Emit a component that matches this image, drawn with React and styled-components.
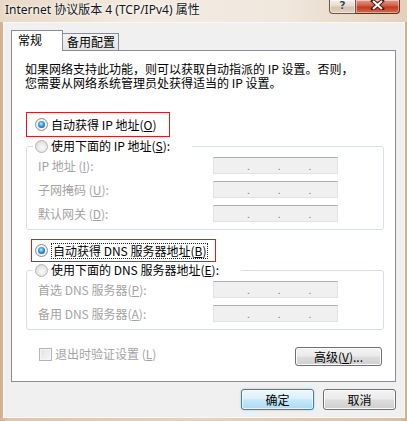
// Dependencies
// -----------------------------------------------
import React from 'react';
import styled, { createGlobalStyle, css } from 'styled-components';

// Global
// -----------------------------------------------
const GlobalStyle = createGlobalStyle`
  html, body {
    margin: 0;
    padding: 0;
    background: #dcc0a2;
  }
  body {
    font-family: "Noto Sans CJK SC", "Noto Sans", sans-serif;
  }
`;

// Window chrome
// -----------------------------------------------
const Window = styled.div`
  width: 407px;
  height: 421px;
  box-sizing: border-box;
  display: flex;
  flex-direction: column;
  overflow: hidden;
  background: linear-gradient(90deg, #d2b08e 0%, #e0c5a8 2%, #e6d2bd 50%, #dcc0a2 98%, #cfae8d 100%);
`;

const TitleBar = styled.div`
  flex: 0 0 22px;
  display: flex;
  align-items: flex-start;
  justify-content: space-between;
  padding: 0 7px 0 5px;
  background: linear-gradient(90deg, #e9d8c6 0%, #f3ebe2 35%, #f0e7dd 70%, #e4d0bc 100%);
`;

const Title = styled.div`
  font-family: "Noto Sans", "Noto Sans CJK SC", sans-serif;
  font-size: 12px;
  line-height: 20px;
  color: #141414;
  text-shadow: 0 0 5px #fff, 0 0 2px #fff;
  white-space: nowrap;
`;

const Captions = styled.div`
  display: flex;
`;

const CaptionButton = styled.div`
  box-sizing: border-box;
  height: 14px;
  display: flex;
  align-items: center;
  justify-content: center;
  border: 1px solid #6b5647;
  border-top: none;
  box-shadow: inset 0 0 0 1px rgba(255, 255, 255, 0.45);
  ${p => p.$close ? css`
    width: 44px;
    border-left: none;
    border-bottom-right-radius: 4px;
    border-color: #6a2419;
    background: linear-gradient(180deg, #e39a88 0%, #d4634c 40%, #c33a22 55%, #d9684a 100%);
  ` : css`
    width: 27px;
    border-bottom-left-radius: 4px;
    background: linear-gradient(180deg, #f6efe8 0%, #e8dbcd 45%, #d7c2ad 55%, #e3d2c1 100%);
  `}
`;

const HelpGlyph = styled.span`
  font-family: "DejaVu Sans", sans-serif;
  font-weight: bold;
  font-size: 11px;
  line-height: 11px;
  margin-top: -3px;
  color: #3a4660;
  text-shadow: 0 0 1px #fff, 0 0 1px #fff;
`;

// Client area
// -----------------------------------------------
const Client = styled.div`
  margin-left: 3px;
  width: 402px;
  height: 396px;
  box-sizing: border-box;
  border: 1px solid #fbf8f4;
  background: #f0f0f0;
  padding: 7px 8px 0 7px;
  display: flex;
  flex-direction: column;
`;

const TabStrip = styled.div`
  display: flex;
  align-items: flex-end;
  height: 20px;
  position: relative;
  z-index: 2;
`;

const Tab = styled.div`
  box-sizing: border-box;
  font-size: 12px;
  line-height: 14px;
  color: #000;
  border: 1px solid #898c95;
  border-bottom: none;
  ${p => p.$active ? css`
    width: 52px;
    height: 21px;
    margin-bottom: -1px;
    padding: 2px 0 0 6px;
    background: #fff;
  ` : css`
    width: 56px;
    height: 17px;
    border-left: none;
    padding: 1px 0 0 4px;
    background: linear-gradient(180deg, #f4f4f4 0%, #e4e4e4 100%);
  `}
`;

const Panel = styled.div`
  box-sizing: border-box;
  width: 385px;
  height: 332px;
  border: 1px solid #898c95;
  background: #fff;
  padding: 13px 11px 0 14px;
  display: flex;
  flex-direction: column;
  align-items: flex-start;
`;

const Desc = styled.div`
  margin: -2px 0 0 -1px;
  font-size: 12px;
  color: #000;
  white-space: nowrap;
`;

const DescLine = styled.p`
  margin: 0;
  line-height: 14px;
`;

// Options
// -----------------------------------------------
const Marked = styled.div`
  box-sizing: border-box;
  display: flex;
  align-items: center;
  border: 1px solid #e51717;
  width: ${p => p.$w}px;
  height: ${p => p.$h}px;
  margin: ${p => p.$mt}px 0 0 ${p => p.$ml}px;
  padding-left: ${p => p.$pl}px;
`;

const Choice = styled.span`
  display: inline-flex;
  align-items: center;
  gap: 3px;
  font-size: 12px;
  line-height: 14px;
  white-space: nowrap;
  color: ${p => p.$disabled ? '#a3a3a3' : '#000'};
`;

const Focus = styled.span`
  border: 1px dotted #222;
  padding: 0 1px;
  line-height: 14px;
`;

const RadioMark = styled.span`
  box-sizing: border-box;
  flex: 0 0 13px;
  width: 13px;
  height: 13px;
  border-radius: 50%;
  position: relative;
  border: 1px solid ${p => p.$disabled ? '#b4b4b4' : '#8e8f8f'};
  background: ${p => p.$disabled
    ? 'radial-gradient(circle at 55% 60%, #fafafa 0%, #e6e6e6 55%, #cfcfcf 100%)'
    : 'radial-gradient(circle at 50% 50%, #ffffff 0%, #f2f2f2 60%, #d9d9d9 100%)'};
  ${p => p.$checked && css`
    &::after {
      content: '';
      position: absolute;
      left: 2px;
      top: 2px;
      width: 7px;
      height: 7px;
      border-radius: 50%;
      background: radial-gradient(circle at 45% 40%, #c4f0ff 0%, #3ea2dc 40%, #14507f 90%);
    }
  `}
`;

const Group = styled.fieldset`
  align-self: stretch;
  margin: ${p => p.$mt}px 0 0 0;
  padding: 4px 11px 7px 11px;
  border: 1px solid #d5dfe5;
  border-radius: 3px;
  min-width: 0;
`;

const Legend = styled.legend`
  display: flex;
  align-items: center;
  margin-left: -5px;
  padding: 0 22px 0 2px;
  height: 14px;
`;

const Fields = styled.div`
  display: grid;
  grid-template-columns: 175px 125px;
  row-gap: 7px;
  align-items: center;
`;

const FieldLabel = styled.span`
  font-size: 12px;
  line-height: 14px;
  color: #a3a3a3;
  white-space: nowrap;
`;

const IpBox = styled.div`
  box-sizing: border-box;
  height: 17px;
  border: 1px solid #dfe3e8;
  border-top-color: #abadb3;
  background: #f0f0f0;
  display: flex;
  align-items: flex-end;
  padding: 0 0 1px 33px;
  gap: 28px;
`;

const Dot = styled.span`
  font-family: "Liberation Sans", sans-serif;
  font-size: 10px;
  line-height: 10px;
  color: #6f6f6f;
`;

// Footer
// -----------------------------------------------
const PanelFoot = styled.div`
  align-self: stretch;
  margin-top: 17px;
  display: flex;
  justify-content: space-between;
  align-items: flex-start;
  padding: 0 2px 0 13px;
`;

const CheckMark = styled.span`
  box-sizing: border-box;
  flex: 0 0 13px;
  width: 13px;
  height: 13px;
  border: 1px solid #b5b5b5;
  background: linear-gradient(135deg, #e2e2e2 0%, #f7f7f7 100%);
  box-shadow: inset 0 0 0 1px #f5f5f5;
`;

const Button = styled.button`
  box-sizing: border-box;
  width: ${p => p.$w}px;
  height: ${p => p.$h}px;
  padding: 0;
  font-family: "Noto Sans CJK SC", sans-serif;
  font-size: 12px;
  line-height: 14px;
  color: #000;
  border-radius: 3px;
  ${p => p.$primary ? css`
    border: 1px solid #3c7fb1;
    background: linear-gradient(180deg, #ecf7fd 0%, #ddf1fc 45%, #c6e8f9 52%, #abdaf3 100%);
    box-shadow: inset 0 0 0 1px rgba(255, 255, 255, 0.7), 0 0 2px rgba(80, 170, 230, 0.6);
  ` : css`
    border: 1px solid #707070;
    background: linear-gradient(180deg, #f3f3f3 0%, #ebebeb 48%, #dddddd 52%, #cfcfcf 100%);
    box-shadow: inset 0 0 0 1px #fbfbfb;
  `}
`;

const DialogButtons = styled.div`
  display: flex;
  justify-content: flex-end;
  gap: 9px;
  margin-top: 7px;
`;

// Data
// -----------------------------------------------
const ipRows = [
  ['IP 地址 (', 'I', '):'],
  ['子网掩码 (', 'U', '):'],
  ['默认网关 (', 'D', '):']
];

const dnsRows = [
  ['首选 DNS 服务器(', 'P', '):'],
  ['备用 DNS 服务器(', 'A', '):']
];

const IpField = () => (
  <IpBox>
    <Dot>.</Dot>
    <Dot>.</Dot>
    <Dot>.</Dot>
  </IpBox>
);

const FieldRows = ({ rows }) => (
  <Fields>
    {rows.map(([pre, key, post]) => (
      <React.Fragment key={key}>
        <FieldLabel>{pre}<u>{key}</u>{post}</FieldLabel>
        <IpField />
      </React.Fragment>
    ))}
  </Fields>
);

// -----------------------------------------------
// COMPONENT->APP --------------------------------
// -----------------------------------------------
export default function App() {
  return (
    <>
      <GlobalStyle />
      <Window>
        <TitleBar>
          <Title>Internet 协议版本 4 (TCP/IPv4) 属性</Title>
          <Captions>
            <CaptionButton>
              <HelpGlyph>?</HelpGlyph>
            </CaptionButton>
            <CaptionButton $close>
              <svg width="15" height="10" viewBox="0 0 15 10" style={{ marginTop: -3 }}>
                <path d="M3 1 L12 9 M12 1 L3 9" stroke="#4a1a12" strokeWidth="4" strokeLinecap="square" />
                <path d="M3 1 L12 9 M12 1 L3 9" stroke="#fff" strokeWidth="2" />
              </svg>
            </CaptionButton>
          </Captions>
        </TitleBar>

        <Client>
          <TabStrip>
            <Tab $active>常规</Tab>
            <Tab>备用配置</Tab>
          </TabStrip>

          <Panel>
            <Desc>
              <DescLine>如果网络支持此功能，则可以获取自动指派的 IP 设置。否则，</DescLine>
              <DescLine>您需要从网络系统管理员处获得适当的 IP 设置。</DescLine>
            </Desc>

            <Marked $w={144} $h={25} $mt={22} $ml={0} $pl={8}>
              <Choice>
                <RadioMark $checked />
                <span>自动获得 IP 地址(<u>O</u>)</span>
              </Choice>
            </Marked>

            <Group $mt={2}>
              <Legend>
                <Choice>
                  <RadioMark $disabled />
                  <span>使用下面的 IP 地址(<u>S</u>):</span>
                </Choice>
              </Legend>
              <FieldRows rows={ipRows} />
            </Group>

            <Marked $w={185} $h={23} $mt={9} $ml={5} $pl={3}>
              <Choice>
                <RadioMark $checked />
                <Focus>自动获得 DNS 服务器地址(<u>B</u>)</Focus>
              </Choice>
            </Marked>

            <Group $mt={1}>
              <Legend>
                <Choice>
                  <RadioMark $disabled />
                  <span>使用下面的 DNS 服务器地址(<u>E</u>):</span>
                </Choice>
              </Legend>
              <FieldRows rows={dnsRows} />
            </Group>

            <PanelFoot>
              <Choice $disabled>
                <CheckMark />
                <span>退出时验证设置 (<u>L</u>)</span>
              </Choice>
              <Button $w={87} $h={19}>高级(<u>V</u>)...</Button>
            </PanelFoot>
          </Panel>

          <DialogButtons>
            <Button $primary $w={73} $h={21}>确定</Button>
            <Button $w={73} $h={21}>取消</Button>
          </DialogButtons>
        </Client>
      </Window>
    </>
  );
}
